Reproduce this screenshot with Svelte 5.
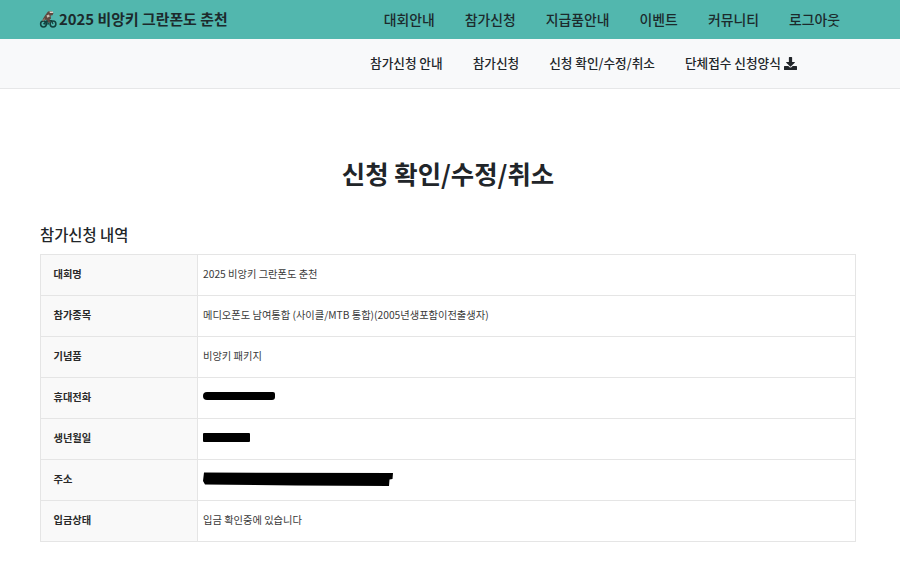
<script>
  const mainNav = ['대회안내', '참가신청', '지급품안내', '이벤트', '커뮤니티', '로그아웃'];
  const subNav = ['참가신청 안내', '참가신청', '신청 확인/수정/취소'];
</script>

<div class="page">
  <header class="top">
    <a class="brand" href="#top">
      <svg class="logo" viewBox="0 0 18 18" width="18" height="18" aria-hidden="true">
        <circle cx="4.500" cy="14" r="2.900" fill="none" stroke="#12403d" stroke-width="1.500" />
        <circle cx="14" cy="14" r="2.900" fill="none" stroke="#12403d" stroke-width="1.500" />
        <path d="M4.500 14 8 10.500h4.500L14 14M8 10.500l1.500 3.500H4.500" fill="none" stroke="#12403d" stroke-width="1.100" />
        <path d="M3.500 9.500 6 5.500 9 1.500l3.500-.5 2 2-1 2.200-2 .3.500 3-1.500 1.500 1 2.500-2 .3-1.500-3-2.500.5z" fill="#5f473f" />
        <path d="M10.500 1.500h3.200l.6 1.500h-3.500z" fill="#ddd6cc" />
        <path d="M7.500 5.500 10 4.500l.8 2-2.500 1.200z" fill="#c9bfb2" />
        <path d="M3 10.500l2.500-2.500 1 1.500-2.500 1.800z" fill="#8a6f62" />
      </svg>
      <span>2025 비앙키 그란폰도 춘천</span>
    </a>
    <nav class="main-nav">
      {#each mainNav as item}
        <a href="#top">{item}</a>
      {/each}
    </nav>
  </header>

  <nav class="sub-nav">
    {#each subNav as item}
      <a href="#top">{item}</a>
    {/each}
    <a href="#top" class="download">
      단체접수 신청양식
      <svg viewBox="0 0 512 512" width="13" height="13" aria-hidden="true">
        <path fill="#212529" d="M216 0h80c13.300 0 24 10.700 24 24v168h87.700c17.800 0 26.700 21.500 14.100 34.100L269.700 378.300c-7.500 7.500-19.800 7.500-27.300 0L90.100 226.100c-12.600-12.600-3.700-34.100 14.100-34.100H192V24c0-13.300 10.700-24 24-24zm296 376v112c0 13.300-10.700 24-24 24H24c-13.300 0-24-10.700-24-24V376c0-13.300 10.700-24 24-24h146.700l49 49c20.100 20.100 52.500 20.100 72.600 0l49-49H488c13.300 0 24 10.700 24 24z" />
      </svg>
    </a>
  </nav>

  <main class="content">
    <h1>신청 확인/수정/취소</h1>
    <h2>참가신청 내역</h2>
    <div class="table">
      <div class="th">대회명</div>
      <div class="td">2025 비앙키 그란폰도 춘천</div>
      <div class="th">참가종목</div>
      <div class="td">메디오폰도 남여통합 (사이클/MTB 통합)(2005년생포함이전출생자)</div>
      <div class="th">기념품</div>
      <div class="td">비앙키 패키지</div>
      <div class="th">휴대전화</div>
      <div class="td"><span class="mask phone"></span></div>
      <div class="th">생년월일</div>
      <div class="td"><span class="mask birth"></span></div>
      <div class="th">주소</div>
      <div class="td">
        <svg class="mask-address" viewBox="0 0 190 15" width="190" height="15" aria-hidden="true">
          <path d="M1 1.500 190 2l-.5 6-3 .5-.5 6.500-93-.500-91-1L0 10z" fill="#000" />
        </svg>
      </div>
      <div class="th">입금상태</div>
      <div class="td">입금 확인중에 있습니다</div>
    </div>
  </main>
</div>

<style>
  :global(body) {
    margin: 0;
    background: #fff;
    font-family: "Noto Sans CJK KR", "Noto Sans", sans-serif;
    color: #212529;
  }

  a {
    color: inherit;
    text-decoration: none;
  }

  .page {
    height: 572px;
    overflow: hidden;
  }

  .top {
    height: 39px;
    box-sizing: border-box;
    padding: 0 60px 2px 39px;
    background: #52b7ae;
    display: flex;
    align-items: center;
    justify-content: space-between;
    color: #1c2a2c;
  }

  .brand {
    display: flex;
    align-items: center;
    gap: 2px;
    font-size: 14.900px;
    font-weight: 700;
  }

  .logo {
    display: block;
  }

  .main-nav {
    display: flex;
    gap: 30px;
    font-size: 13.880px;
    font-weight: 500;
  }

  .sub-nav {
    height: 50px;
    box-sizing: border-box;
    background: #f8f9fa;
    border-bottom: 1px solid #e6e7e8;
    display: flex;
    align-items: center;
    gap: 30px;
    padding: 0 0 2px 370px;
    font-size: 12.650px;
    font-weight: 500;
  }

  .download {
    display: flex;
    align-items: center;
    gap: 3px;
  }

  .download svg {
    margin-top: 2px;
  }

  .content {
    padding: 0 44px 0 40px;
  }

  h1 {
    margin: 0;
    padding-top: 65px;
    text-align: center;
    font-size: 25.400px;
    line-height: 38px;
    font-weight: 700;
    color: #212529;
  }

  h2 {
    margin: 0;
    padding-top: 30px;
    font-size: 15.400px;
    line-height: 24px;
    font-weight: 500;
    color: #212529;
  }

  .table {
    margin-top: 8px;
    display: grid;
    grid-template-columns: 157px 1fr;
    grid-auto-rows: 41px;
    border-top: 1px solid #e5e5e5;
    border-left: 1px solid #e5e5e5;
    border-right: 1px solid #e5e5e5;
  }

  .th,
  .td {
    display: flex;
    align-items: center;
    box-sizing: border-box;
    border-bottom: 1px solid #e5e5e5;
    font-size: 10.250px;
    padding-bottom: 4px;
  }

  .th {
    background: #f9f9f9;
    border-right: 1px solid #e5e5e5;
    padding-left: 12.500px;
    font-weight: 700;
    color: #2a2a2a;
  }

  .td {
    padding-left: 5px;
    color: #3a3a3a;
  }

  .mask {
    display: block;
    background: #000;
  }

  .phone {
    width: 72px;
    height: 8px;
    border-radius: 4px 2px 3px 4px;
  }

  .birth {
    width: 47px;
    height: 9px;
    border-radius: 1px;
  }

  .mask-address {
    display: block;
  }
</style>
